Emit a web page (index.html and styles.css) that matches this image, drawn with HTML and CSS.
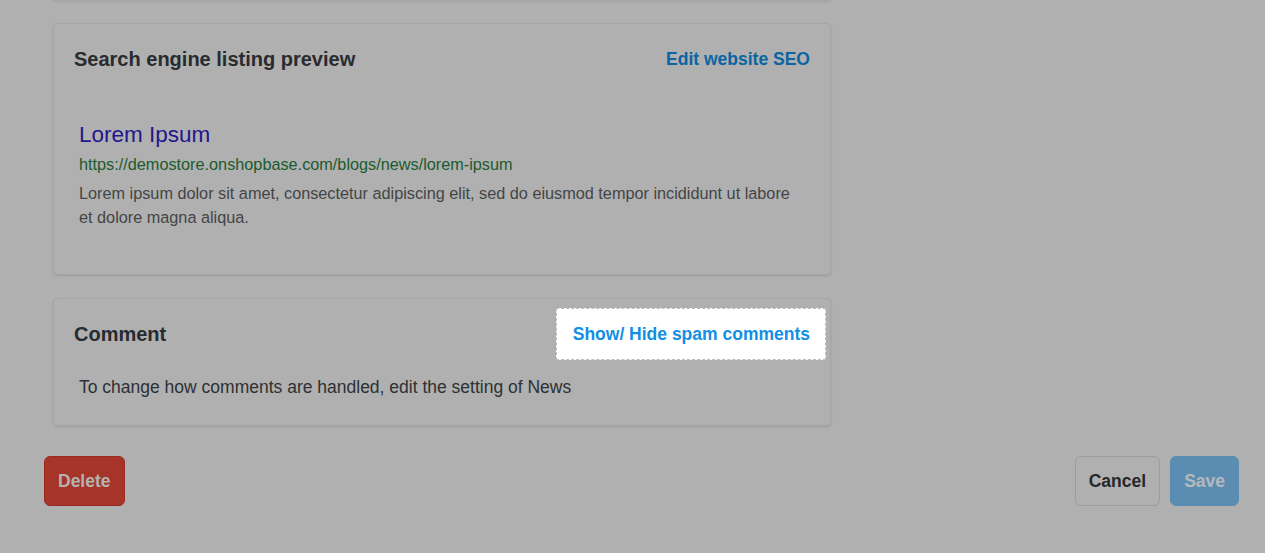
FILE: index.html
```html
<!DOCTYPE html>
<html lang="en">
<head>
<meta charset="utf-8">
<title>Blog post</title>
<link rel="stylesheet" href="styles.css">
</head>
<body>
<div class="page">
  <div class="cards">
    <div class="card stub"></div>
    <section class="card seo">
      <header class="card-head">
        <h2 class="card-title">Search engine listing preview</h2>
        <a class="link" href="#">Edit website SEO</a>
      </header>
      <div class="preview">
        <div class="preview-title">Lorem Ipsum</div>
        <div class="preview-url">https://demostore.onshopbase.com/blogs/news/lorem-ipsum</div>
        <p class="preview-desc">Lorem ipsum dolor sit amet, consectetur adipiscing elit, sed do eiusmod tempor incididunt ut labore et dolore magna aliqua.</p>
      </div>
    </section>
    <section class="card comment">
      <header class="card-head">
        <h2 class="card-title">Comment</h2>
        <a class="link spot" href="#">Show/ Hide spam comments</a>
      </header>
      <p class="comment-text">To change how comments are handled, edit the setting of News</p>
    </section>
  </div>
  <footer class="actions">
    <button class="btn btn-danger" type="button">Delete</button>
    <div class="actions-right">
      <button class="btn btn-default" type="button">Cancel</button>
      <button class="btn btn-primary" type="button">Save</button>
    </div>
  </footer>
</div>
</body>
</html>
```

FILE: styles.css
```css
* { box-sizing: border-box; }
html, body {
  margin: 0;
  padding: 0;
  background: #b0b0b0;
  font-family: "Liberation Sans", Arial, sans-serif;
  height: 100%;
  overflow: hidden;
}
.page {
  display: flex;
  flex-direction: column;
}
.cards {
  margin-left: 53px;
  width: 778px;
  display: flex;
  flex-direction: column;
  gap: 23px;
}
.card {
  background: #b0b0b0;
  border: 1px solid #a5a5a5;
  border-radius: 4px;
  box-shadow: 0 1px 2px rgba(0, 0, 0, 0.10);
  padding: 23px 20px;
}
.stub {
  height: 1px;
  padding: 0;
  border-top: 0;
  border-radius: 0 0 4px 4px;
  margin-bottom: -1px;
}
.card-head {
  display: flex;
  justify-content: space-between;
  align-items: center;
  height: 24px;
}
.card-title {
  margin: 0;
  font-size: 20px;
  line-height: 24px;
  font-weight: bold;
  color: #282b2f;
}
.link {
  font-size: 17.5px;
  line-height: 24px;
  font-weight: bold;
  color: #0a65a3;
  text-decoration: none;
}
.spot {
  position: relative;
  z-index: 0;
  color: #118fe4;
}
.spot::before {
  content: "";
  position: absolute;
  left: -17px;
  right: -16px;
  top: -14px;
  bottom: -14px;
  background: #ffffff;
  border: 1px dashed #bcbcbc;
  z-index: -1;
}
.preview {
  margin: 50px 5px 22px;
}
.preview-title {
  font-size: 22.5px;
  line-height: 28px;
  color: #1f178c;
}
.preview-url {
  margin-top: 3px;
  font-size: 16.25px;
  line-height: 24px;
  color: #1b5b2d;
}
.preview-desc {
  margin: 5px 0 0;
  font-size: 16.25px;
  line-height: 24px;
  color: #444546;
}
.comment-text {
  margin: 29px 5px 3px;
  font-size: 17.5px;
  line-height: 24px;
  color: #2d3034;
}
.actions {
  margin-top: 30px;
  padding: 0 26px 0 44px;
  display: flex;
  justify-content: space-between;
  align-items: center;
}
.actions-right {
  display: flex;
  gap: 10px;
}
.btn {
  height: 50px;
  padding: 0 13px;
  border: 1px solid transparent;
  border-radius: 6px;
  font-family: inherit;
  font-size: 17.5px;
  font-weight: bold;
  cursor: pointer;
}
.btn-danger {
  background: #a63428;
  border-color: #9a2a20;
  color: #b3b3b3;
}
.btn-default {
  background: #b0b0b0;
  border-color: #9d9d9d;
  color: #25282b;
}
.btn-primary {
  background: #5a8db1;
  border-color: #5a8db1;
  color: #b4b9bd;
}
```
